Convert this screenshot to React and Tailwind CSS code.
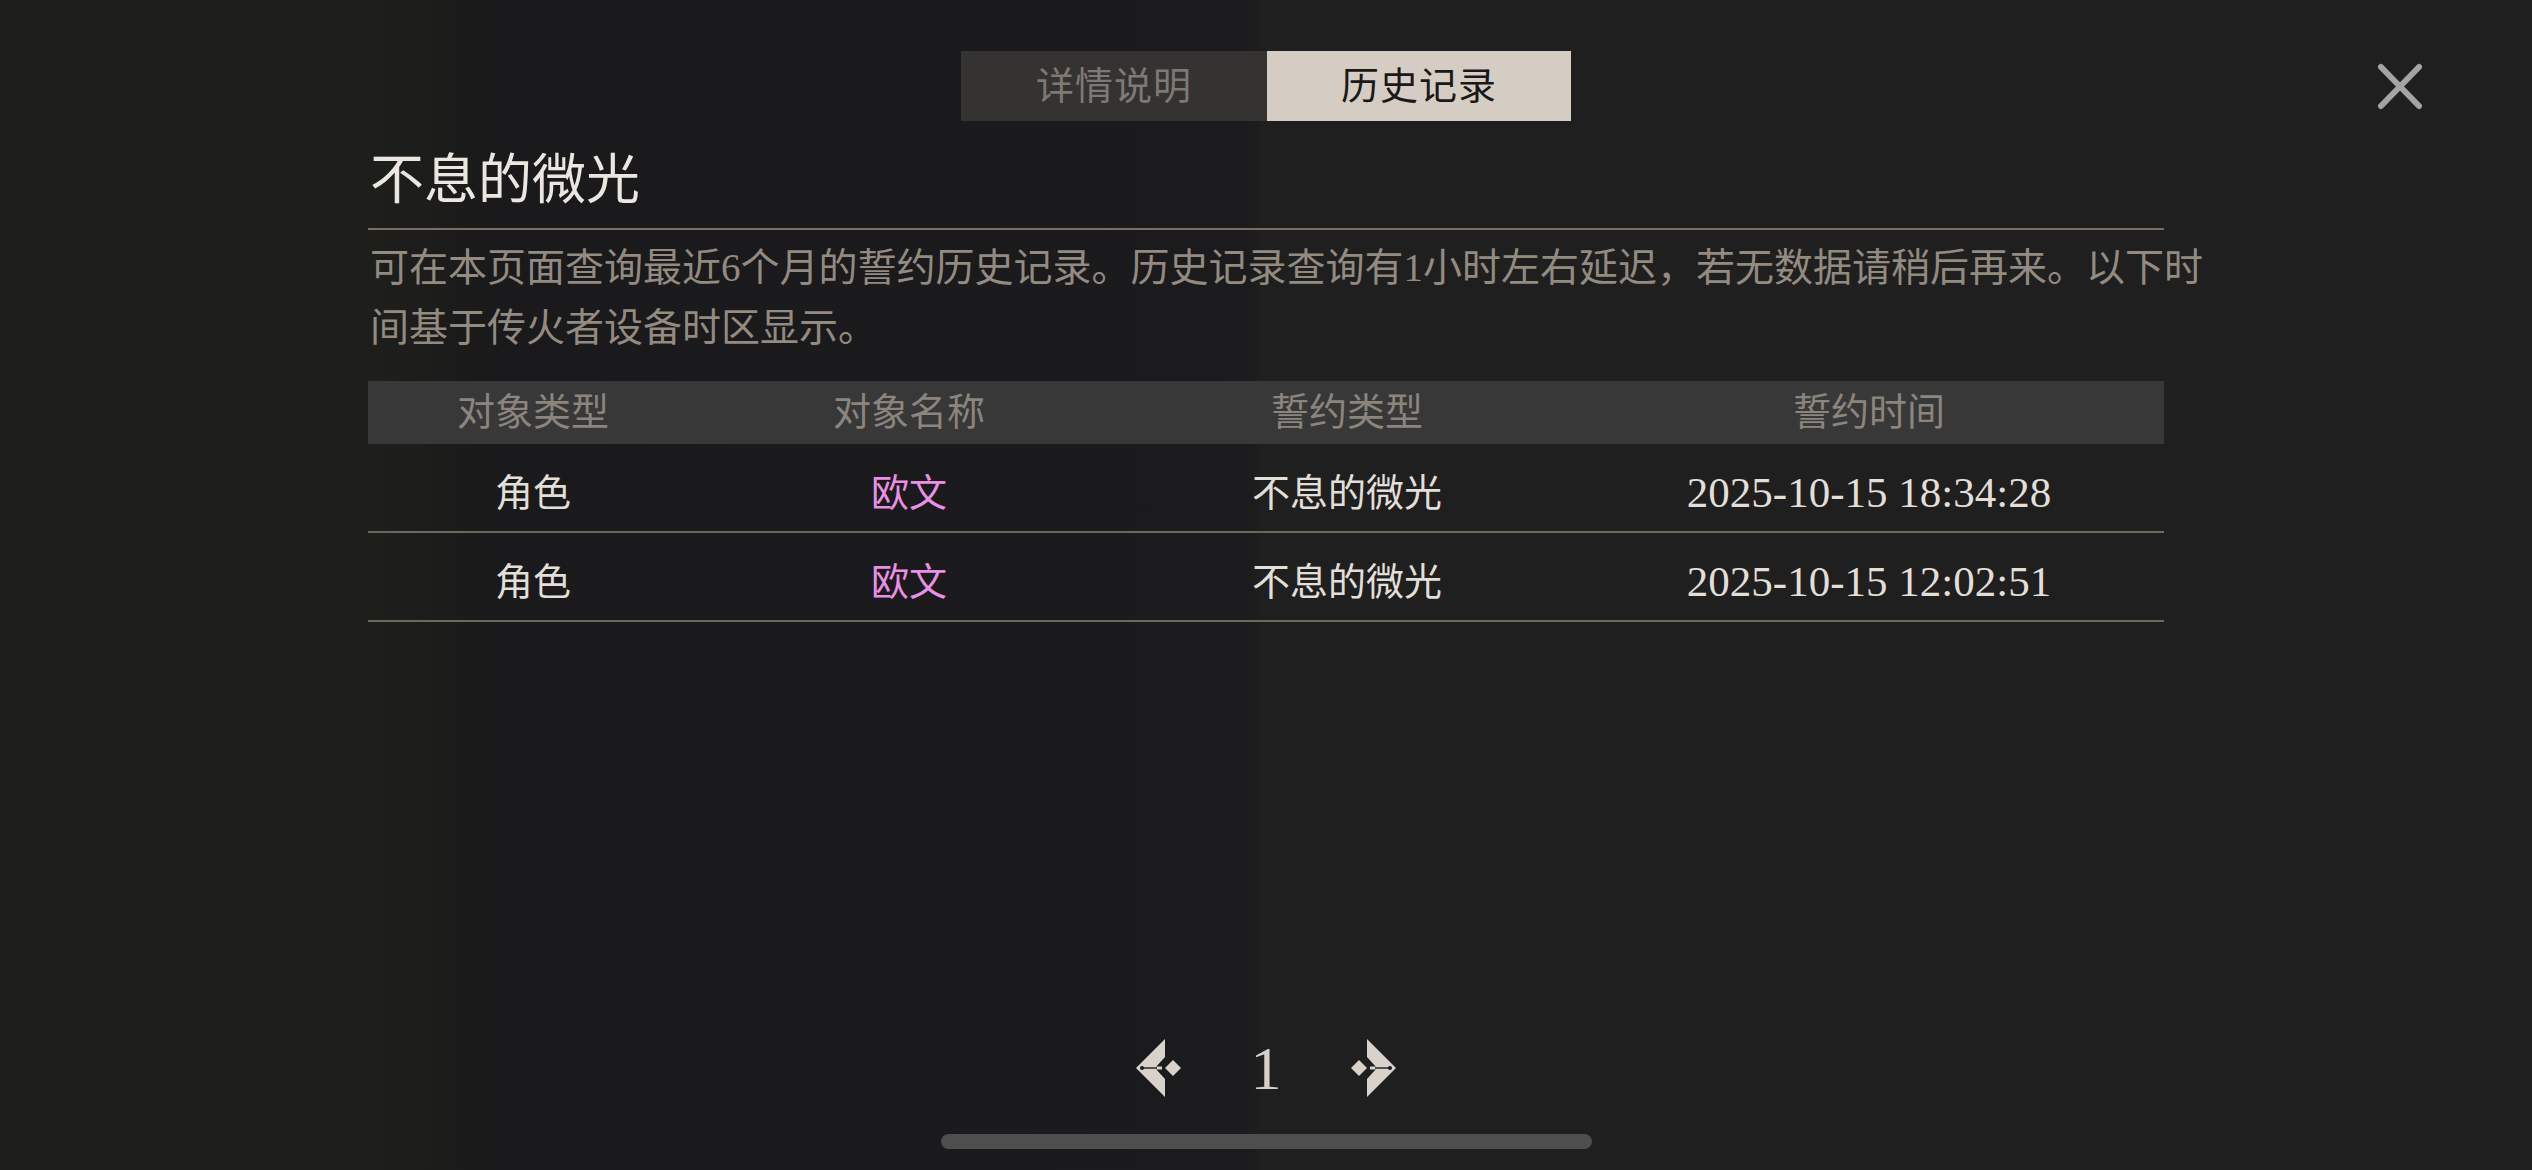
import React from 'react';

const rows = [
  { type: '角色', name: '欧文', oath: '不息的微光', time: '2025-10-15 18:34:28' },
  { type: '角色', name: '欧文', oath: '不息的微光', time: '2025-10-15 12:02:51' },
];

const cols = ['w-[330px]', 'w-[422px]', 'w-[454px]', 'w-[590px]'];

// Ornamental pager arrow (chevron + diamond)
const PagerArrow = ({ flip }) => (
  <svg
    viewBox="0 0 46 60"
    className={`w-[46px] h-[60px] ${flip ? '-scale-x-100' : ''}`}
  >
    <path d="M30 1 L1 30 L30 59 L30 41 L20 30 L30 19 Z" fill="#d9d2cb" />
    <line x1="6" y1="30" x2="27" y2="30" stroke="#d9d2cb" strokeWidth="3" />
    <line x1="7" y1="30" x2="22" y2="30" stroke="#1b1a1c" strokeWidth="1.4" />
    <circle cx="7" cy="30" r="2" fill="#1b1a1c" />
    <path d="M38 22 L46 30 L38 38 L30 30 Z" fill="#d9d2cb" />
  </svg>
);

const App = () => {
  return (
    <div
      className="relative w-[2532px] h-[1170px] overflow-hidden flex flex-col items-center pt-[51px] bg-[linear-gradient(to_right,#1e1f1b_0px,#1e1f1b_370px,#1a191b_500px,#1b1a1c_1245px,#1f1f1f_1262px,#1f1f1f_100%)]"
      style={{ fontFamily: '"Liberation Serif", "Noto Sans CJK SC", serif' }}
    >
      {/* Close button */}
      <button className="absolute top-[63px] right-[109px] w-[46px] h-[47px]">
        <svg viewBox="0 0 46 47" className="w-full h-full">
          <path d="M4 4 L42 43 M42 4 L4 43" stroke="#a4a4a4" strokeWidth="6" strokeLinecap="round" />
        </svg>
      </button>

      {/* Tabs */}
      <div className="flex h-[70px]">
        <div className="w-[306px] h-full bg-[#353232] flex items-center justify-center text-[38px] text-[#7f7974] tracking-[1px]">
          详情说明
        </div>
        <div className="w-[304px] h-full bg-[#d5cdc3] flex items-center justify-center text-[38px] text-[#1a1818] tracking-[1px]">
          历史记录
        </div>
      </div>

      {/* Content */}
      <div className="w-[1796px] flex flex-col">
        <h1 className="mt-[29px] ml-[2px] text-[54px] leading-[62px] text-[#ebe6df] font-normal">
          不息的微光
        </h1>
        <div className="mt-[16px] h-[2px] bg-[#796e5f]" />
        <p className="mt-[8px] ml-[2px] text-[39px] leading-[60px] text-[#938a80] whitespace-nowrap">
          <span className="block">可在本页面查询最近6个月的誓约历史记录。历史记录查询有1小时左右延迟，若无数据请稍后再来。以下时</span>
          <span className="block">间基于传火者设备时区显示。</span>
        </p>

        {/* Table */}
        <div className="mt-[23px] flex flex-col">
          <div className="flex h-[63px] bg-[#383838] text-[38px] text-[#8b857e]">
            {['对象类型', '对象名称', '誓约类型', '誓约时间'].map((h, i) => (
              <div key={h} className={`${cols[i]} flex items-center justify-center`}>
                {h}
              </div>
            ))}
          </div>
          {rows.map((r, idx) => (
            <div key={idx} className="flex h-[89px] pt-[12px] border-b-2 border-[#6f675b] text-[38px] text-[#e2ded8]">
              <div className={`${cols[0]} flex items-center justify-center`}>{r.type}</div>
              <div className={`${cols[1]} flex items-center justify-center text-[#e890e4]`}>{r.name}</div>
              <div className={`${cols[2]} flex items-center justify-center`}>{r.oath}</div>
              <div className={`${cols[3]} flex items-center justify-center text-[43px]`}>{r.time}</div>
            </div>
          ))}
        </div>
      </div>

      {/* Pagination */}
      <div className="mt-[416px] h-[60px] flex items-center gap-[55px]">
        <PagerArrow />
        <div className="w-[60px] text-center text-[62px] leading-[60px] text-[#d6d0ca]">1</div>
        <PagerArrow flip />
      </div>

      {/* Home indicator */}
      <div className="mt-[36px] w-[651px] h-[15px] rounded-full bg-[#4e4e4e]" />
    </div>
  );
};

export default App;
